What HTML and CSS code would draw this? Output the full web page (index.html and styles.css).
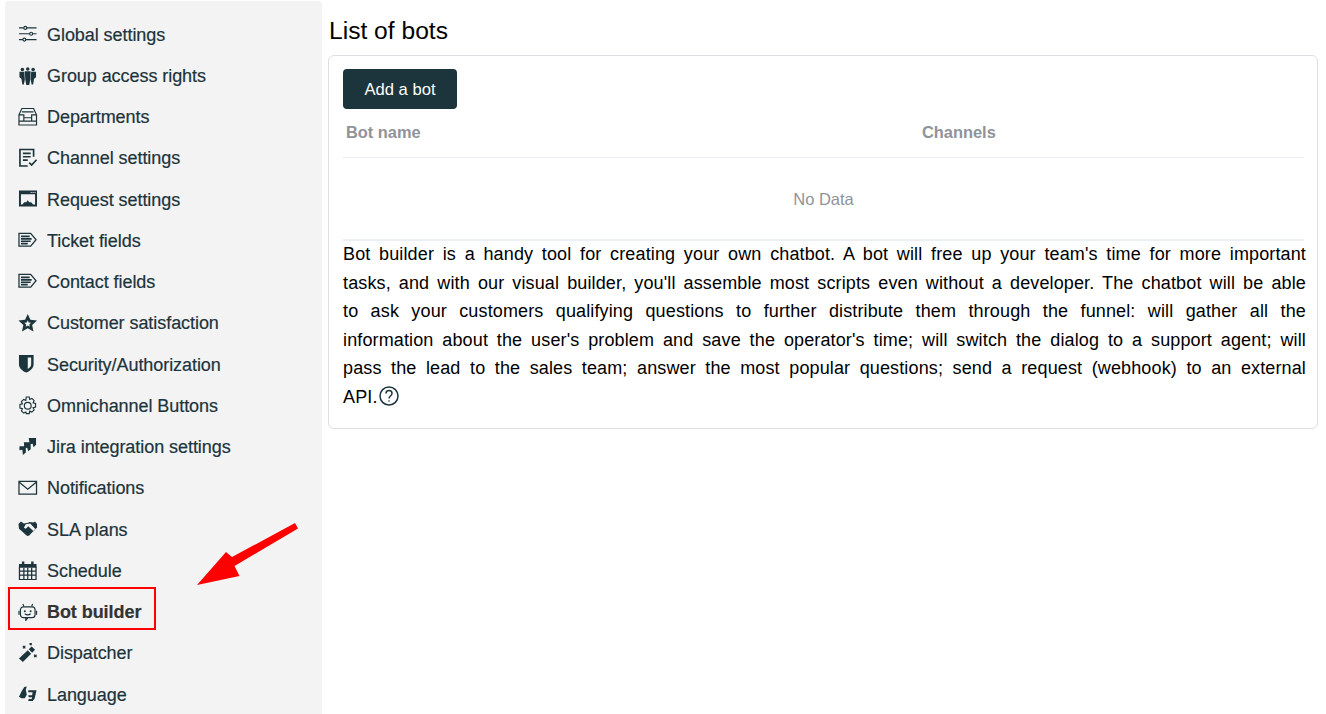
FILE: index.html
```html
<!DOCTYPE html>
<html lang="en">
<head>
<meta charset="utf-8">
<title>List of bots</title>
<link rel="stylesheet" href="styles.css">
</head>
<body>
<div class="page">
  <nav class="sidebar">
    <a class="item"><svg class="icon" viewBox="0 0 20 20"><g class="ln"><path d="M1 4h5M9 4h10M1 10h11M15 10h4M1 16h4M8 16h11"/><circle cx="7.500" cy="4" r="1.500"/><circle cx="13.500" cy="10" r="1.500"/><circle cx="6.500" cy="16" r="1.500"/></g></svg><span>Global settings</span></a>
    <a class="item"><svg class="icon" viewBox="0 0 20 20"><g class="fl"><circle cx="4.500" cy="3.500" r="1.800"/><circle cx="10" cy="3" r="1.800"/><circle cx="15.500" cy="3.500" r="1.800"/><path d="M1.500 6h5l.5 8-1 5H4.500l-1-6L1.500 11.500zM13.500 6h5v5.500L16.500 13l-1 6H14l-1-5zM7 5.500h6L12.500 14l-1 5.500h-3L7.500 14z"/></g></svg><span>Group access rights</span></a>
    <a class="item"><svg class="icon" viewBox="0 0 20 20"><g class="ln"><path d="M1 8l3-6.500h12L19 8v10.500H1zM1 8h5v3h8V8h5M4 5h12M6 11v3.500h8V11M1 14.500h18"/></g></svg><span>Departments</span></a>
    <a class="item"><svg class="icon" viewBox="0 0 20 20"><path class="ln heavy" d="M16 9V1.500H2v17h8M5 5.500h8M5 9h8M5 12.500h5M11.500 15l2.500 2.500 5-5.500"/></svg><span>Channel settings</span></a>
    <a class="item"><svg class="icon" viewBox="0 0 20 20"><path class="fl" fill-rule="evenodd" d="M1 1.500h18.500v16.500H1zM3 5.500V16h1.500l2-2.500h2L10 11.500l1.500 2h2l2 2.500H17.500V5.500zM13 3v1h1V3zm2 0v1h1V3zm2 0v1h1V3z"/></svg><span>Request settings</span></a>
    <a class="item"><svg class="icon" viewBox="0 0 20 20"><path class="ln" d="M1 2.500h12l5.500 6.500-5.500 6.500H1z"/><path class="ln heavy" d="M3 5.500h9M3 8h11M3 10.500h10M3 13h7"/></svg><span>Ticket fields</span></a>
    <a class="item"><svg class="icon" viewBox="0 0 20 20"><path class="ln" d="M1 2.500h12l5.500 6.500-5.500 6.500H1z"/><path class="ln heavy" d="M3 5.500h9M3 8h11M3 10.500h10M3 13h7"/></svg><span>Contact fields</span></a>
    <a class="item"><svg class="icon" viewBox="0 0 20 20"><path class="fl" fill-rule="evenodd" d="M10 1l2.700 6 6.800.8-5 4.600 1.400 6.700L10 15.700 4.100 19.100 5.500 12.400.5 7.800 7.300 7zM10 7.500l-1 2.300-2.400.3 1.800 1.600-.5 2.400 2.100-1.200 2.100 1.200-.5-2.400 1.800-1.600-2.400-.3z"/></svg><span>Customer satisfaction</span></a>
    <a class="item"><svg class="icon" viewBox="0 0 20 20"><path class="fl" fill-rule="evenodd" d="M1 1h15v9.500c0 4-3.500 7-7.500 8.500C4.500 17.500 1 14.500 1 10.500zM10 3.500v12c2-1.300 3.500-3 3.500-5v-7z"/></svg><span>Security/Authorization</span></a>
    <a class="item"><svg class="icon" viewBox="0 0 20 20"><g class="ln"><circle cx="10" cy="10" r="3.500"/><path d="M8.500 1h3l.5 2.500 2.200-1 2.300 2.200-1 2.300 2.500.7v3.600l-2.500.7 1 2.300-2.300 2.200-2.200-1-.5 2.500h-3L8 16.500l-2.200 1-2.300-2.200 1-2.300-2.500-.7V8.700L4.500 8l-1-2.300L5.800 3.500l2.200 1z"/></g></svg><span>Omnichannel Buttons</span></a>
    <a class="item"><svg class="icon" viewBox="0 0 20 20"><path class="fl" d="M11 1h7.500v7L16 10.500l-1-3.500-3 .5zM6 5.500h7v7l-2.500 2-1-3.500-3 .5zM1.500 9.500H8v6.500L5 18.500l-.5-5.500-3 .5z"/></svg><span>Jira integration settings</span></a>
    <a class="item"><svg class="icon" viewBox="0 0 20 20"><path class="ln" d="M1 3.500h18v13H1zM1 4l9 7.500L19 4"/></svg><span>Notifications</span></a>
    <a class="item"><svg class="icon" viewBox="0 0 20 20"><path class="fl" d="M.5 5L3 2.500l3 2 3.500-.5L12 3l4 .5 1.500-1L19.500 5v4l-2 1.500-6 6.500-2 .5-2.500-2-3-3-3-2.500zM8 5.500L6 9l2 1 2.500-2.500 5.500 5 2-2-5.500-6z"/></svg><span>SLA plans</span></a>
    <a class="item"><svg class="icon" viewBox="0 0 20 20"><path class="fl" d="M4 .5h2.500V3h7V.5H16V3h3v4H1V3h3z"/><path class="ln" d="M1.500 6v13h17V6M1.500 10.500h17M1.500 14.500h17M6 7v12M10 7v12M14 7v12"/></svg><span>Schedule</span></a>
    <a class="item active"><svg class="icon" viewBox="0 0 20 20"><g class="ln"><rect x="2.500" y="5" width="15" height="11" rx="3"/><path d="M1 9v4M19 9v4M6 4.500L5 2M14 4.500L15 2M7 12c2 1.500 4 1.500 6 0M8 16v3l2-3"/></g><circle class="fl" cx="7" cy="9.500" r="1"/><circle class="fl" cx="13" cy="9.500" r="1"/></svg><span>Bot builder</span></a>
    <a class="item"><svg class="icon" viewBox="0 0 20 20"><path class="fl" d="M10 7.500l3.500 3.500-8.500 8.500-4-3.500zM11 6.500l3-3 3.500 3.500-3 3z"/><path class="ln" d="M5 3l2.500 2.500M7.500 3L5 5.500M12 0l2 2M14 0l-2 2M16.500 12l2.500 2.500M19 12l-2.500 2.500"/></svg><span>Dispatcher</span></a>
    <a class="item"><svg class="icon" viewBox="0 0 20 20"><path class="fl" d="M1 13l3-6 2.500-4L9 2.500 8 6l1 5-2 3.500H3.500zM10.500 6.500h8.500L17 15l-2 2.500h-4.500l.5-2h3l.5-2H11l-.5-2h4l.5-3h-4.500z"/></svg><span>Language</span></a>
  </nav>
  <main class="main">
    <h1 class="title">List of bots</h1>
    <section class="card">
      <button class="btn">Add a bot</button>
      <div class="thead">
        <div class="th th-name">Bot name</div>
        <div class="th">Channels</div>
      </div>
      <div class="empty">No Data</div>
      <p class="desc">Bot builder is a handy tool for creating your own chatbot. A bot will free up your team's time for more important<br>tasks, and with our visual builder, you'll assemble most scripts even without a developer. The chatbot will be able<br>to ask your customers qualifying questions to further distribute them through the funnel: will gather all the<br>information about the user's problem and save the operator's time; will switch the dialog to a support agent; will<br>pass the lead to the sales team; answer the most popular questions; send a request (webhook) to an external<span class="last">API.<svg class="help" viewBox="0 0 20 20"><circle cx="10" cy="10" r="9"/><path d="M7 7.500c0-4 6-4 6 0 0 2.500-3 2.500-3 5"/><circle class="dot" cx="10" cy="15" r=".800"/></svg></span></p>
    </section>
  </main>
</div>
<div class="highlight"></div>
<svg class="arrow" viewBox="0 0 110 70"><path d="M98 1l3 5.500L37.500 44l5 10L0 63l29-33 6 5z" fill="#f00"/></svg>
</body>
</html>
```
FILE: styles.css
```css
html, body { margin: 0; padding: 0; background: #fff; }
body { font-family: "Liberation Sans", Arial, sans-serif; position: relative; height: 714px; overflow: hidden; }
.page { display: flex; padding: 1px 0 0 5px; }
.sidebar { width: 317px; height: 713px; flex: none; background: #f3f3f3; border-radius: 4px 4px 0 0; padding-top: 13.500px; box-sizing: border-box; }
.item { display: flex; align-items: center; height: 41.250px; padding-left: 13px; color: #1c343b; font-size: 18px; }
.item span { margin-left: 9.500px; letter-spacing: -.06px; -webkit-text-stroke: .2px currentColor; }
.item.active { color: #333; font-weight: 700; }
.icon { width: 19.500px; height: 19.500px; flex: none; margin-top: -2px; }
.ln { fill: none; stroke: #1c343b; stroke-width: 1.200; }
path.ln { fill: none; stroke: #1c343b; stroke-width: 1.300; }
path.heavy { stroke-width: 1.700; }
.fl { fill: #1c343b; }
.main { flex: 1; padding: 0 8px 0 6px; min-width: 0; }
.title { font-size: 24.600px; font-weight: 400; line-height: 28px; margin: 16px 0 10px 1px; color: #000; }
.card { border: 1px solid #dfdfe3; border-radius: 6px; padding: 13px 11px 16px 14px; height: 374px; box-sizing: border-box; }
.btn { display: block; width: 114px; height: 40px; background: #1c343b; color: #fff; border: 0; border-radius: 4px; font: 16.600px "Liberation Sans", Arial, sans-serif; padding: 1px 0 0; }
.thead { display: flex; width: 961px; height: 49px; border-bottom: 1px solid #ebeef5; align-items: center; color: #909399; font-size: 16.400px; font-weight: 700; padding-bottom: 2px; box-sizing: border-box; }
.th-name { width: 579px; padding-left: 3px; box-sizing: border-box; }
.empty { width: 961px; height: 83px; display: flex; align-items: center; justify-content: center; color: #909399; font-size: 16.500px; border-bottom: 2px solid #ebeef5; padding-top: 2px; box-sizing: border-box; }
.desc { margin: -1px 0 0; font-size: 18px; line-height: 28.600px; text-align: justify; text-align-last: justify; color: #000; letter-spacing: .13px; }
.last { display: block; text-align-last: left; }
.help { width: 20px; height: 20px; vertical-align: -3px; margin-left: 1px; fill: none; stroke: #1c343b; stroke-width: 1.500; }
.help .dot { fill: #1c343b; stroke: none; }
.highlight { position: absolute; left: 8px; top: 587px; width: 148px; height: 43px; border: 2px solid #f00; box-sizing: border-box; }
.arrow { position: absolute; left: 197px; top: 522px; width: 110px; height: 70px; }
```
